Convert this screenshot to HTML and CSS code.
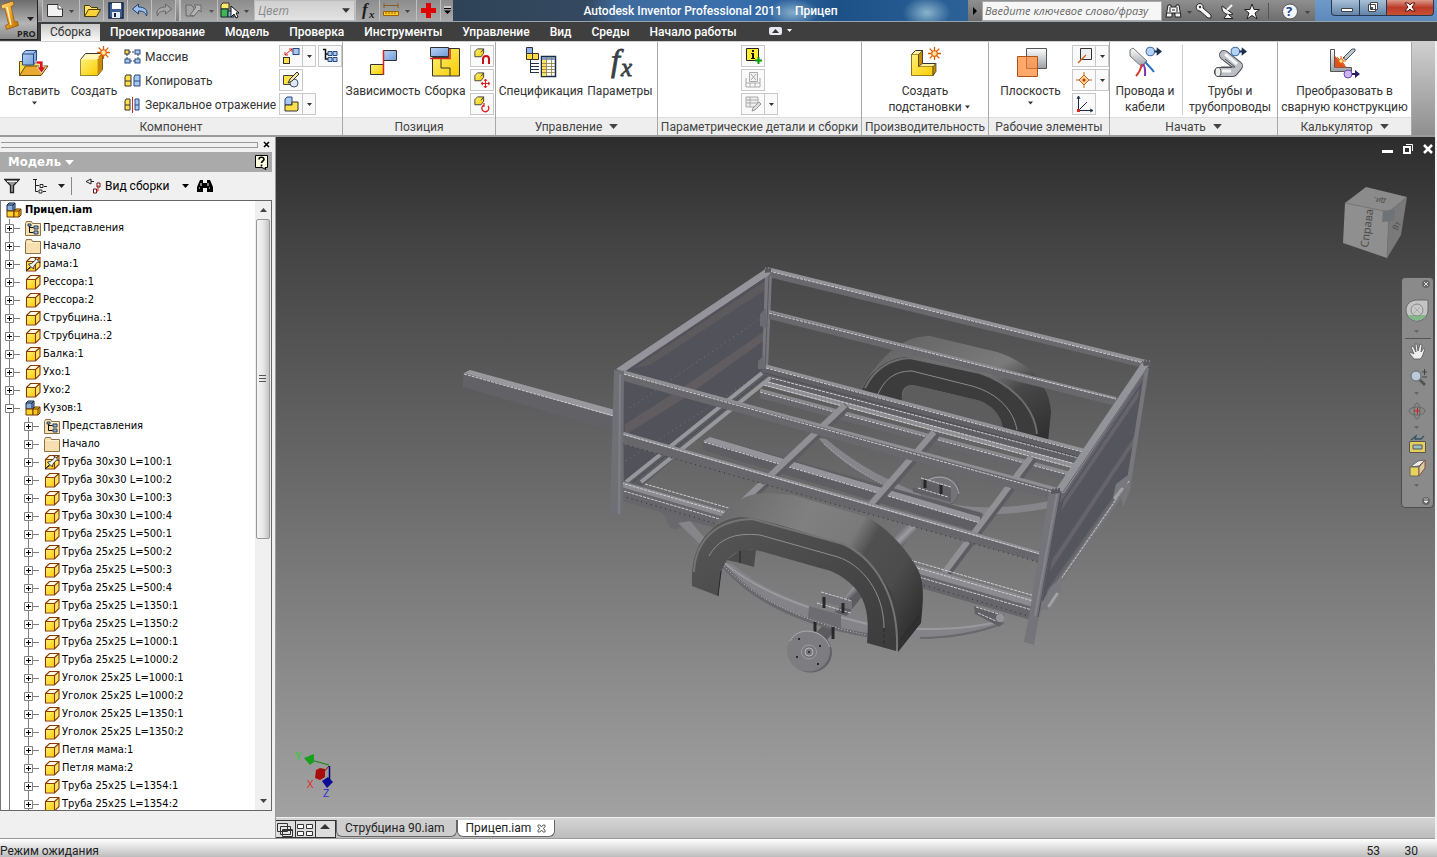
FILE: index.html
```html
<!DOCTYPE html>
<html lang="ru">
<head>
<meta charset="utf-8">
<title>Autodesk Inventor Professional 2011 - Прицеп</title>
<link rel="stylesheet" href="styles.css">
</head>
<body>
<svg class="sprite" aria-hidden="true">
  <defs>
    <linearGradient id="gYellow" x1="0" y1="0" x2="1" y2="1"><stop offset="0" stop-color="#fff27a"/><stop offset="1" stop-color="#f9cc00"/></linearGradient>
    <linearGradient id="gBlue" x1="0" y1="0" x2="1" y2="1"><stop offset="0" stop-color="#b9d4f5"/><stop offset="1" stop-color="#6f9bd8"/></linearGradient>
    <linearGradient id="gSteel" x1="0" y1="0" x2="0" y2="1"><stop offset="0" stop-color="#fdfdfd"/><stop offset="1" stop-color="#9aa0a6"/></linearGradient>
    <linearGradient id="gGold" x1="0" y1="0" x2="1" y2="1"><stop offset="0" stop-color="#ffe28a"/><stop offset="0.5" stop-color="#f0a020"/><stop offset="1" stop-color="#b86c00"/></linearGradient>
  </defs>
  <symbol id="cube" viewBox="0 0 16 16"><path d="M1 5l4-4h10v9l-4 5H1z" fill="#fffbe6"/><path d="M1.500 5.500h9v9h-9z" fill="url(#gYellow)"/><path d="M11 5l4-4v9l-4 4z" fill="#ffe566"/><path d="M1.500 5.500l4-4h9.500v9l-4.500 4.500h-9zM1.500 5.500h9v9M10.500 5.500l4.500-4" fill="none" stroke="#8a3a00" stroke-width="1.100"/></symbol>
  <symbol id="pinned" viewBox="0 0 16 16"><use href="#cube"/><path d="M1 15l4.500-4.500-2-2.500 3-.5 4-3.500-.5-2.500 5 5-2.500-.5-3.500 4-.5 3-2-2z" fill="#f4f4f4" stroke="#222" stroke-width=".9"/></symbol>
  <symbol id="folder" viewBox="0 0 16 16"><path d="M.5 3.500l1-2h5l1 2h8v12H.5z" fill="#f8dfb0" stroke="#8c7347"/><path d="M2 4.500h13" stroke="#fff3d6"/></symbol>
  <symbol id="views" viewBox="0 0 16 16"><use href="#folder"/><path d="M4.500 6v6.500h4M4.500 7.500h4" stroke="#111" fill="none"/><path d="M9 6h4v3H9zM9 11h4v3H9zM3 4h3v2H3z" fill="#9fb4cc" stroke="#23405f"/></symbol>
  <symbol id="asm" viewBox="0 0 16 16"><path d="M1 3l2-2h6v6l-1 2H1z" fill="#8fb0dd" stroke="#10233f"/><path d="M1 3h6v5M7 3l2-2" stroke="#10233f" fill="none"/><path d="M1 9h7v6H1z" fill="#ffd22e" stroke="#6b3500"/><path d="M8 9l2-2h5v6l-2 2H8zM8 9h5v6M13 9l2-2" fill="#ffc61a" stroke="#6b3500"/></symbol>
  <symbol id="plus" viewBox="0 0 24 18"><path d="M8.500 0v18M12 9.500h7" stroke="#808080"/><path d="M4.500 5.500h8v8h-8z" fill="#fff" stroke="#808080"/><path d="M6 9.500h5M8.500 7v5" stroke="#000"/></symbol>
  <symbol id="minus" viewBox="0 0 24 18"><path d="M8.500 0v18M12 9.500h7" stroke="#808080"/><path d="M4.500 5.500h8v8h-8z" fill="#fff" stroke="#808080"/><path d="M6 9.500h5" stroke="#000"/></symbol>
  <symbol id="line" viewBox="0 0 19 18"><path d="M8.500 0v18" stroke="#808080"/></symbol>
  <symbol id="down" viewBox="0 0 7 4"><path d="M0 0h7L3.500 4z" fill="currentColor"/></symbol>
  <symbol id="spark" viewBox="0 0 12 12"><path d="M6 0v12M0 6h12M1.500 1.500l9 9M10.500 1.500l-9 9" stroke="#e05a00" stroke-width="1.200"/><circle cx="6" cy="6" r="2.600" fill="#ffe9a0" stroke="#e05a00"/></symbol>
  <symbol id="smallcube" viewBox="0 0 16 16"><path d="M1 4l3-3h7v5l-3 4H1z" fill="url(#gYellow)" stroke="#333"/><path d="M8 5l3-4" stroke="#333"/></symbol>
  <symbol id="linkout" viewBox="0 0 16 10"><circle cx="5" cy="5" r="4" fill="#b5d3f5" stroke="#3d6ea8"/><path d="M9 5h4" stroke="#1c2f4f" stroke-width="2"/><path d="M11 1l5 4-5 4z" fill="#1c2f4f"/></symbol>
</svg>

<div class="app">
  <header class="top">
    <button class="appbtn" aria-label="Меню приложения">
      <svg width="37" height="39" viewBox="0 0 37 39"><path d="M1 5l12-4 1 4-3 1.500 3.500 15.500 3-.5 1 4-12 4-1-4 3-1.500L5 8.500 2 9z" fill="url(#gGold)" stroke="#7d4a00" stroke-width=".6"/><path d="M7 7l4 18" stroke="#fff0b8" stroke-width="1.500"/><path d="M27 17h7l-3.500 4z" fill="#222"/><text x="17" y="37" class="pro">PRO</text></svg>
    </button>
    <div class="titlebar">
      <div class="qat">
        <button class="q wide" aria-label="Новый"><svg width="32" height="20" viewBox="0 0 32 20"><path d="M4.500 4.500h11l4 4v8h-15z" fill="#f2f2f2" stroke="#333"/><path d="M15 4v5h5" fill="#fff" stroke="#333"/><path d="M26 10h5l-2.500 3z" fill="#444"/></svg></button>
        <button class="q" aria-label="Открыть"><svg width="24" height="20" viewBox="0 0 24 20"><path d="M4.500 16V5.500h5l2 2h6V10" fill="#ffe169" stroke="#4a3b00"/><path d="M4.500 16.500l4-7h12l-4 7z" fill="#f9d335" stroke="#4a3b00"/></svg></button>
        <button class="q" aria-label="Сохранить"><svg width="24" height="20" viewBox="0 0 24 20"><path d="M5 3h14v15H5z" fill="#3e5d91" stroke="#142544" stroke-width="1.500"/><path d="M8 3h9v6H8z" fill="#fff"/><path d="M8 12h8v6H8z" fill="#e4e9f2"/><path d="M10 13h2v4h-2z" fill="#142544"/></svg></button>
        <button class="q" aria-label="Отменить"><svg width="24" height="20" viewBox="0 0 24 20"><path d="M4.500 9l6-5v3c6 0 10 3 8 9-1-4-4-5-8-5v3z" fill="#9cc0ee" stroke="#1d3e6e"/></svg></button>
        <button class="q" aria-label="Повторить"><svg width="24" height="20" viewBox="0 0 24 20"><path d="M19.500 9l-6-5v3c-6 0-10 3-8 9 1-4 4-5 8-5v3z" fill="#a5a5a5" stroke="#666"/></svg></button>
        <i class="sep"></i>
        <button class="q wide" aria-label="Обновить"><svg width="34" height="20" viewBox="0 0 34 20"><path d="M5 5h5l3 3v8H5z" fill="#a4a4a4" stroke="#666"/><path d="M9 15l6-8-2-2h7v7l-2-2-5 6z" fill="#b4b4b4" stroke="#686868"/><path d="M28 10h5l-2.500 3z" fill="#555"/></svg></button>
        <button class="q wide" aria-label="Выбор"><svg width="32" height="20" viewBox="0 0 32 20"><path d="M3 5l2-2h6v6H3z" fill="#ffe969" stroke="#333"/><path d="M3 9h7v8H3z" fill="#42b551" stroke="#123"/><path d="M10 11h6v6h-6z" fill="#8eaedb" stroke="#123"/><path d="M13 6v11l3-3 2 4 2-1-2-4h3z" fill="#fff" stroke="#111"/><path d="M26 10h5l-2.500 3z" fill="#444"/></svg></button>
        <label class="colorbox"><select aria-label="Цвет"><option>Цвет</option></select><svg width="8" height="5"><use href="#down"/></svg></label>
        <button class="q" aria-label="Параметры"><svg width="24" height="20" viewBox="0 0 24 20"><text x="6" y="15" class="fx" font-size="17">f</text><text x="13" y="18" class="fx" font-size="11">x</text></svg></button>
        <button class="q wide" aria-label="Измерить"><svg width="32" height="20" viewBox="0 0 32 20"><path d="M4 5.500h14M4 3v5M18 3v5" stroke="#8a5a20"/><path d="M3.500 11.500h15v4h-15z" fill="#ffc926" stroke="#9a6200"/><path d="M6 12v2M9 12v2M12 12v2M15 12v2" stroke="#9a6200"/><path d="M25 10h5l-2.500 3z" fill="#444"/></svg></button>
        <button class="q" aria-label="Добавить"><svg width="22" height="20" viewBox="0 0 22 20"><path d="M9 3h5v5h5v5h-5v5H9v-5H4V8h5z" fill="#e00000"/></svg></button>
        <button class="q more" aria-label="Настройка панели"><svg width="9" height="9" viewBox="0 0 9 9"><path d="M1 1h7" stroke="#fff" stroke-width="1"/><path d="M1 2.500h7" stroke="#000"/><path d="M1 4.500h7L4.500 8z" fill="#000"/></svg></button>
      </div>
      <div class="aero"><span>Autodesk Inventor Professional 2011</span><span>Прицеп</span></div>
      <div class="info">
        <svg width="14" height="12" viewBox="0 0 14 12"><path d="M5 2l4 4-4 4z" fill="#000"/></svg>
        <input type="text" aria-label="Поиск" placeholder="Введите ключевое слово/фразу">
        <button aria-label="Поиск"><svg width="30" height="20" viewBox="0 0 30 20"><path d="M6 4h3v2h5V4h3l2 12h-6v-4h-3v4H4z" fill="#f4f4f4" stroke="#222"/><path d="M5 12h5M13 12h5M8 6v5M15 6v5M10 9h3" stroke="#222"/><path d="M25 10h5l-2.500 3z" fill="#444"/></svg></button>
        <button aria-label="Центр подписки"><svg width="24" height="20" viewBox="0 0 24 20"><path d="M5 4c2-3 7-1 6 3l8 7v3h-3l-8-7c-3 0-5-3-3-6z" fill="#f4f4f4" stroke="#222"/><circle cx="8" cy="6" r="1.200" fill="#333"/></svg></button>
        <button aria-label="Связь"><svg width="24" height="20" viewBox="0 0 24 20"><path d="M6 5c-1 6 4 10 11 8z" fill="#f4f4f4" stroke="#222"/><path d="M11 9l5-5" stroke="#f4f4f4" stroke-width="2"/><path d="M11 13l-3 4.500h9L13 14" stroke="#222" fill="#f4f4f4"/></svg></button>
        <button aria-label="Избранное"><svg width="24" height="20" viewBox="0 0 24 20"><path d="M12 3l2 5.500h5.500L15 12l2 6-5-3.500L7 18l2-6-4.500-3.500H10z" fill="#f8f8f8" stroke="#222"/></svg></button>
        <i class="isep"></i>
        <button aria-label="Справка"><svg width="38" height="20" viewBox="0 0 38 20"><circle cx="13" cy="10.500" r="7.500" fill="#f3f6fb" stroke="#555"/><text x="9" y="15" class="qm">?</text><path d="M28 10h5l-2.500 3z" fill="#444"/></svg></button>
      </div>
      <div class="win">
        <button aria-label="Свернуть"><svg width="28" height="16" viewBox="0 0 28 16"><path d="M9.500 8.500h11v3h-11z" fill="#fff" stroke="#444"/></svg></button>
        <button aria-label="Восстановить"><svg width="26" height="16" viewBox="0 0 26 16"><path d="M10.500 2.500h7v7h-7zM8.500 4.500h7v7h-7z" fill="#fff" stroke="#444"/><path d="M11 7h2v2h-2z" fill="#456"/></svg></button>
        <button class="close" aria-label="Закрыть"><svg width="46" height="16" viewBox="0 0 46 16"><path d="M18 3h3l2 2 2-2h3l-3 4 3 4h-3l-2-2-2 2h-3l3-4z" fill="#fff" stroke="#511"/></svg></button>
      </div>
    </div>
    <nav class="tabs">
      <button class="on">Сборка</button><button>Проектирование</button><button>Модель</button><button>Проверка</button><button>Инструменты</button><button>Управление</button><button>Вид</button><button>Среды</button><button>Начало работы</button>
      <button class="mini" aria-label="Свернуть ленту"><svg width="24" height="9" viewBox="0 0 24 9"><rect x="0" y="0" width="13" height="8" rx="2" fill="#e8e8f0"/><path d="M3 6h7L6.500 2z" fill="#333"/><path d="M18 2h5l-2.500 3z" fill="#fff"/></svg></button>
    </nav>
  </header>

  <section class="ribbon">
    <div class="panel p1"><div class="body">
      <button class="big w60"><svg width="34" height="34" viewBox="0 0 34 34"><path d="M2.500 15.500h22l-.5 12-21.500 2z" fill="#ffe04a" stroke="#6a4b00"/><path d="M2.500 29.500l6-9.500h22.500l-7 9.500z" fill="#e8aa30" stroke="#6a4b00"/><path d="M5.500 8l3-3.500h11v11l-3 3.500h-11z" fill="url(#gBlue)" stroke="#26497f"/><path d="M5.500 8h11v10.500M16.500 8l3-3.500" fill="none" stroke="#26497f"/><path d="M19 15h7v6h3l-4.500 6-4.500-6h2.500v-3H19z" fill="#d8141c" stroke="#fff" stroke-width=".7"/></svg><span>Вставить</span><svg class="dd" width="5" height="4"><use href="#down"/></svg></button>
      <button class="big w60"><svg width="34" height="34" viewBox="0 0 34 34"><path d="M3.500 13.500l5-6h17v16l-5 6h-17z" fill="#fff6b8" stroke="#333"/><path d="M3.500 13.500h17v16h-17z" fill="url(#gYellow)"/><path d="M20.500 13.500l5-6v16l-5 6z" fill="#c98a00"/><use href="#spark" x="20" y="0" width="13" height="13"/></svg><span>Создать</span></button>
      <div class="rows">
        <button><svg width="17" height="16" viewBox="0 0 17 16"><path d="M5 3h7M3 5v6M14 5v6M6 12h5" stroke="#335" stroke-dasharray="2 1"/><rect x="1" y="1" width="4" height="4" fill="#ffe04a" stroke="#333"/><rect x="11" y="1" width="5" height="4" fill="#a9c8f2" stroke="#26497f"/><rect x="1" y="10" width="5" height="4" fill="#a9c8f2" stroke="#26497f"/><rect x="11" y="10" width="5" height="4" fill="#a9c8f2" stroke="#26497f"/></svg>Массив</button>
        <button><svg width="17" height="16" viewBox="0 0 17 16"><path d="M1 4l1-2h5v11H1zM1 8h6" fill="#ffe04a" stroke="#333"/><path d="M10 4l1-2h5v11h-6zM10 8h6" fill="#a9c8f2" stroke="#26497f"/></svg>Копировать</button>
        <button><svg width="17" height="16" viewBox="0 0 17 16"><path d="M1 4l1-2h4v11H1zM1 8h5" fill="#ffe04a" stroke="#333"/><path d="M11 2h4v11h-4zM11 8h4" fill="#a9c8f2" stroke="#26497f"/><path d="M8.500 0v16" stroke="#d22"/></svg>Зеркальное отражение</button>
      </div>
      <div class="minis">
        <div><span class="split"><button aria-label="Разместить"><svg width="20" height="20" viewBox="0 0 20 20"><rect x="2.500" y="11.500" width="6" height="6" fill="#ffe04a" stroke="#333"/><rect x="12" y="2.500" width="6" height="6" fill="#a9c8f2" stroke="#26497f"/><path d="M4 9l7-6M4 6v3h3M8 3h3v3" stroke="#d22" fill="none"/></svg></button><button class="arr" aria-label="Ещё"><svg width="5" height="3"><use href="#down"/></svg></button></span><button class="sq" aria-label="Дерево"><svg width="20" height="20" viewBox="0 0 20 20"><path d="M3 3.500h2.500V13H8M5.500 8H8" stroke="#111" fill="none" stroke-width="1.500"/><path d="M8 5.500h4v4H8zM13 5.500h4v4h-4zM8 11.500h4v4H8zM13 11.500h4v4h-4z" fill="#a9c8f2" stroke="#26497f"/></svg></button></div>
        <div><button class="sq" aria-label="Правка"><svg width="20" height="20" viewBox="0 0 20 20"><path d="M2.500 5.500h11v9h-11z" fill="#ffe04a" stroke="#444"/><circle cx="13" cy="13" r="4" fill="#dfe8f4" stroke="#456"/><path d="M7 13l2-4 7-7 2 2-7 7z" fill="#fbe3a0" stroke="#333"/></svg></button></div>
        <div><span class="split"><button aria-label="Деталь"><svg width="20" height="20" viewBox="0 0 20 20"><path d="M4 5l2-2h5v8H4z" fill="#a9c8f2" stroke="#26497f"/><path d="M4 11h7V8h6v8l-1 1H4z" fill="#ffe04a" stroke="#333"/></svg></button><button class="arr" aria-label="Ещё"><svg width="5" height="3"><use href="#down"/></svg></button></span></div>
      </div>
    </div><h2>Компонент</h2></div>

    <div class="panel p2"><div class="body">
      <button class="big w80"><svg width="34" height="34" viewBox="0 0 34 34"><path d="M17.500 4.500h13v10h-13z" fill="url(#gBlue)" stroke="#333"/><path d="M4.500 18.500h13v10h-13z" fill="url(#gYellow)" stroke="#333"/><path d="M17.500 4v25" stroke="#d22" stroke-width="1.500"/></svg><span>Зависимость</span></button>
      <button class="big w44"><svg width="34" height="34" viewBox="0 0 34 34"><path d="M4.500 11.500h16v-9h11v27.500h-27z" fill="url(#gYellow)" stroke="#333"/><path d="M13 13v9h9v8" fill="none" stroke="#333"/><path d="M2.500 1.500h18v9h-18z" fill="url(#gBlue)" stroke="#333"/><path d="M2 12.500h20V3" fill="none" stroke="#d22" stroke-width="1.500"/></svg><span>Сборка</span></button>
      <div class="minis">
        <div><button class="sq" aria-label="Магнит"><svg width="20" height="20" viewBox="0 0 20 20"><use href="#smallcube" x="2" y="2" width="14" height="14"/><path d="M11 18v-5c0-4 6-4 6 0v5" fill="none" stroke="#c11" stroke-width="2"/></svg></button></div>
        <div><button class="sq" aria-label="Переместить"><svg width="20" height="20" viewBox="0 0 20 20"><use href="#smallcube" x="2" y="2" width="14" height="14"/><path d="M13.500 9v9M9 13.500h9M12 11l1.500-2 1.500 2M12 16l1.500 2 1.500-2M11 12l-2 1.500 2 1.500M16 12l2 1.500-2 1.500" stroke="#d22" fill="none"/></svg></button></div>
        <div><button class="sq" aria-label="Повернуть"><svg width="20" height="20" viewBox="0 0 20 20"><use href="#smallcube" x="2" y="2" width="14" height="14"/><path d="M12 11a3.500 3.500 0 1 0 4 1M12 9v3h-2" stroke="#d22" stroke-width="1.300" fill="none"/></svg></button></div>
      </div>
    </div><h2>Позиция</h2></div>

    <div class="panel p3"><div class="body">
      <button class="big w90"><svg width="34" height="34" viewBox="0 0 34 34"><path d="M2.500 1.500h6v6h-6z" fill="#8fb4ec" stroke="#333"/><path d="M2.500 7.500h6v6h-6zM8.500 7.500h6v6h-6z" fill="#ffdc3c" stroke="#333"/><path d="M6.500 13v14M6 17.500h9M6 20.500h9M6 23.500h9M6 26.500h9" stroke="#234"/><path d="M17.500 10.500h14v20h-14z" fill="#fff" stroke="#1b2c48" stroke-width="1.500"/><path d="M18 11h13v3H18z" fill="#7f9cc4"/><path d="M18 14h4v16h-4z" fill="#ffe169"/><path d="M18 17.500h13M18 20.500h13M18 23.500h13M18 26.500h13M22.500 11v19M27.500 11v19" stroke="#8a7a40" stroke-width=".8"/></svg><span>Спецификация</span></button>
      <button class="big w68"><svg width="34" height="34" viewBox="0 0 34 34"><text x="8" y="25" class="fxb" font-size="32">f</text><text x="18" y="30" class="fxb" font-size="25">x</text></svg><span>Параметры</span></button>
    </div><h2>Управление <svg width="9" height="5" viewBox="0 0 7 4"><use href="#down"/></svg></h2></div>

    <div class="panel p4"><div class="body mid">
      <div class="minis">
        <div><button class="sq" aria-label="Свойства"><svg width="20" height="20" viewBox="0 0 20 20"><path d="M3.500 2.500h12v12h-12z" fill="#ffee32" stroke="#222"/><path d="M9 4h2v2H9zM8 7h3v5h1v1H8v-1h1V8H8z" fill="#111"/><path d="M15.500 11v7M12 14.500h7" stroke="#0a9a10" stroke-width="2"/></svg></button></div>
        <div><button class="sq" disabled aria-label="Таблица"><svg width="20" height="20" viewBox="0 0 20 20"><path d="M3 8v9h14V8M3 13h14M7 13v4M12 13v4" fill="none" stroke="#aaa"/><path d="M6.500 2.500h8v9h-8zM8 4l5 6M13 4l-5 6" fill="#f2f2f2" stroke="#aaa"/></svg></button></div>
        <div><span class="split"><button disabled aria-label="Править таблицу"><svg width="20" height="20" viewBox="0 0 20 20"><path d="M3 3h12v10H3zM3 6h12M3 9h12M7 3v10" fill="#eee" stroke="#aaa"/><path d="M9 17l1-3 6-6 2 2-6 6z" fill="#ddd" stroke="#999"/></svg></button><button class="arr" aria-label="Ещё"><svg width="5" height="3"><use href="#down"/></svg></button></span></div>
      </div>
    </div><h2>Параметрические детали и сборки</h2></div>

    <div class="panel p5"><div class="body mid">
      <button class="big"><svg width="34" height="34" viewBox="0 0 34 34"><path d="M3.500 8.500l4-4h7v13h13l-2 11.500h-22z" fill="#fff2a0" stroke="#333"/><path d="M3.500 8.500h7v12h14.500v9H3.500z" fill="url(#gYellow)" stroke="#8a6500" stroke-width=".7"/><path d="M10.500 8.500l4-4v13l-4 3zM25 20.500l3-3v8l-3 4z" fill="#c98a00" stroke="#333" stroke-width=".7"/><use href="#spark" x="20" y="1" width="13" height="13"/></svg><span>Создать</span><span class="last">подстановки <svg width="5" height="4"><use href="#down"/></svg></span></button>
    </div><h2>Производительность</h2></div>

    <div class="panel p6"><div class="body">
      <button class="big w82"><svg width="34" height="34" viewBox="0 0 34 34"><path d="M12.500 2.500h20v20h-20z" fill="url(#gSteel)" stroke="#555"/><path d="M3.500 10.500h20v20h-20z" fill="#ff9a50" fill-opacity=".85" stroke="#b0521a"/><path d="M12.500 10v12.500h11" fill="none" stroke="#b0521a" stroke-opacity=".5"/></svg><span>Плоскость</span><svg class="dd" width="5" height="4"><use href="#down"/></svg></button>
      <div class="minis">
        <div><span class="split"><button aria-label="Ось"><svg width="20" height="20" viewBox="0 0 20 20"><path d="M6.500 2.500h11v11h-11z" fill="#eceef0" stroke="#333"/><path d="M4 17l8-8" stroke="#d2601a" stroke-width="1.500"/></svg></button><button class="arr" aria-label="Ещё"><svg width="5" height="3"><use href="#down"/></svg></button></span></div>
        <div><span class="split"><button aria-label="Точка"><svg width="20" height="20" viewBox="0 0 20 20"><path d="M10 5l5 5-5 5-5-5z" fill="#ffd08a" stroke="#c8641a"/><path d="M10 2v3M10 15v3M2 10h3M15 10h3" stroke="#c8641a"/><circle cx="10" cy="10" r="1.500" fill="#a33"/></svg></button><button class="arr" aria-label="Ещё"><svg width="5" height="3"><use href="#down"/></svg></button></span></div>
        <div><button class="sq" aria-label="ПСК"><svg width="20" height="20" viewBox="0 0 20 20"><path d="M4.500 3v13.500h14M5 16l8-8" fill="none" stroke="#1b2c48"/><path d="M3 5l1.500-3L6 5M16 15l3 1.500-3 1.500" fill="none" stroke="#1b2c48"/><path d="M3 15h3v3H3z" fill="#d22"/></svg></button></div>
      </div>
    </div><h2>Рабочие элементы</h2></div>

    <div class="panel p7"><div class="body">
      <button class="big w70"><svg width="34" height="34" viewBox="0 0 34 34"><path d="M2 4l3-2 14 13-5 6L2 10z" fill="url(#gSteel)" stroke="#777"/><path d="M14 18c-1 4-2 8-6 12" stroke="#d8382c" stroke-width="2" fill="none"/><path d="M15 18c3 4 2 7 2 12" stroke="#7a3ab0" stroke-width="2" fill="none"/><path d="M17 16c3 3 6 6 9 10" stroke="#2a72c4" stroke-width="2" fill="none"/><use href="#linkout" x="17" y="0" width="17" height="11"/></svg><span>Провода и</span><span>кабели</span></button>
      <i class="vsep"></i>
      <button class="big grow"><svg width="34" height="34" viewBox="0 0 34 34"><path d="M11 9l14 11-5 6H6" fill="none" stroke="#4a4f55" stroke-width="10" stroke-linejoin="round" stroke-linecap="round"/><path d="M11 9l14 11-5 6H6" fill="none" stroke="#bcc0c5" stroke-width="8" stroke-linejoin="round" stroke-linecap="round"/><path d="M12 8l12 10M18 25H7" fill="none" stroke="#f4f5f6" stroke-width="3" stroke-linejoin="round"/><path d="M12 13l10 8H8" fill="none" stroke="#4a4f55"/><ellipse cx="5" cy="26" rx="3" ry="4.500" fill="#eee" stroke="#4a4f55"/><use href="#linkout" x="17" y="0" width="17" height="11"/></svg><span>Трубы и</span><span>трубопроводы</span></button>
    </div><h2>Начать <svg width="9" height="5" viewBox="0 0 7 4"><use href="#down"/></svg></h2></div>

    <div class="panel p8"><div class="body mid">
      <button class="big"><svg width="34" height="34" viewBox="0 0 34 34"><path d="M3.500 3.500h4v18h17v4h-21z" fill="url(#gSteel)" stroke="#555"/><path d="M8 10l12 11.500H8z" fill="#e2501c"/><path d="M16 12l9-9h3v2l-9 9z" fill="#bcc4cc" stroke="#456"/><use href="#spark" x="9" y="10" width="10" height="10"/><circle cx="21" cy="28" r="4" fill="#cdb6f0" stroke="#6a4ab0"/><path d="M25 28h4" stroke="#2b1c5f" stroke-width="2"/><path d="M28 24l5 4-5 4z" fill="#2b1c5f"/></svg><span>Преобразовать в</span><span>сварную конструкцию</span></button>
    </div><h2>Калькулятор <svg width="9" height="5" viewBox="0 0 7 4"><use href="#down"/></svg></h2></div>
  </section>

  <main class="work">
    <aside class="side">
      <div class="grip"><i></i><button aria-label="Закрыть панель"><svg width="7" height="7" viewBox="0 0 7 7"><path d="M1 1l5 5M6 1L1 6" stroke="#000" stroke-width="1.600"/></svg></button></div>
      <div class="shead"><b>Модель</b><svg width="9" height="5" viewBox="0 0 7 4"><use href="#down"/></svg><button aria-label="Справка"><svg width="14" height="15" viewBox="0 0 14 15"><path d="M.5.500h12v12H10l1 2-4-2H.5z" fill="#ffffe1" stroke="#000"/><path d="M4 4.500c0-3 5-3 5 0 0 1.500-2.500 1.500-2.500 3.500M6.500 9.500v2" fill="none" stroke="#000" stroke-width="1.600"/></svg></button></div>
      <div class="stools">
        <button aria-label="Фильтр"><svg width="16" height="16" viewBox="0 0 16 16"><path d="M.8 1.500h14.400l-5.700 6v7h-3v-7z" fill="#999" stroke="#222" stroke-width="1.300"/><path d="M3 3.500h10" stroke="#eee"/></svg></button>
        <button class="t2" aria-label="Структура"><svg width="32" height="16" viewBox="0 0 32 16"><path d="M0 1.500h4M2.500 2v11.500H5M2.500 7.500H6M11 8.500h3M10 13.500h3" stroke="#222" fill="none"/><path d="M7 6.500h3v3H7zM6 12h3v3H6z" stroke="#222" fill="#fff"/><path d="M25 6h7l-3.500 4z" fill="#222"/></svg></button>
        <i></i>
        <button class="t3"><svg width="16" height="16" viewBox="0 0 16 16"><path d="M6 1L1 3.500 6 6zM6 3.500h3" fill="none" stroke="#222"/><path d="M8.500 11h3v4h-3zM12 5h3v4h-3z" fill="#fff" stroke="#611"/><path d="M11 13h2V7" stroke="#c22" fill="none"/></svg><span>Вид сборки</span><svg width="7" height="4"><use href="#down"/></svg></button>
        <button class="t4" aria-label="Найти"><svg width="16" height="14" viewBox="0 0 16 14"><path d="M3 1h3v3h4V1h3l3 7v5h-6V9H6v4H0V8z" fill="#000"/><path d="M2 9h1M12 9h1M4 4v3M11 4v3" stroke="#fff"/></svg></button>
      </div>
      <div class="treebox">
        <ul class="tree">
          <li class="root"><svg class="ic"><use href="#asm"/></svg><b>Прицеп.iam</b></li>
          <li><button aria-label="Развернуть"><svg><use href="#plus"/></svg></button><svg class="ic"><use href="#views"/></svg>Представления</li>
          <li><button aria-label="Развернуть"><svg><use href="#plus"/></svg></button><svg class="ic"><use href="#folder"/></svg>Начало</li>
          <li><button aria-label="Развернуть"><svg><use href="#plus"/></svg></button><svg class="ic"><use href="#pinned"/></svg>рама:1</li>
          <li><button aria-label="Развернуть"><svg><use href="#plus"/></svg></button><svg class="ic"><use href="#cube"/></svg>Рессора:1</li>
          <li><button aria-label="Развернуть"><svg><use href="#plus"/></svg></button><svg class="ic"><use href="#cube"/></svg>Рессора:2</li>
          <li><button aria-label="Развернуть"><svg><use href="#plus"/></svg></button><svg class="ic"><use href="#cube"/></svg>Струбцина.:1</li>
          <li><button aria-label="Развернуть"><svg><use href="#plus"/></svg></button><svg class="ic"><use href="#cube"/></svg>Струбцина.:2</li>
          <li><button aria-label="Развернуть"><svg><use href="#plus"/></svg></button><svg class="ic"><use href="#cube"/></svg>Балка:1</li>
          <li><button aria-label="Развернуть"><svg><use href="#plus"/></svg></button><svg class="ic"><use href="#cube"/></svg>Ухо:1</li>
          <li><button aria-label="Развернуть"><svg><use href="#plus"/></svg></button><svg class="ic"><use href="#cube"/></svg>Ухо:2</li>
          <li><button aria-label="Свернуть"><svg><use href="#minus"/></svg></button><svg class="ic"><use href="#asm"/></svg>Кузов:1</li>
          <li><svg class="ln"><use href="#line"/></svg><button aria-label="Развернуть"><svg><use href="#plus"/></svg></button><svg class="ic"><use href="#views"/></svg>Представления</li>
          <li><svg class="ln"><use href="#line"/></svg><button aria-label="Развернуть"><svg><use href="#plus"/></svg></button><svg class="ic"><use href="#folder"/></svg>Начало</li>
          <li><svg class="ln"><use href="#line"/></svg><button aria-label="Развернуть"><svg><use href="#plus"/></svg></button><svg class="ic"><use href="#pinned"/></svg>Труба 30x30 L=100:1</li>
          <li><svg class="ln"><use href="#line"/></svg><button aria-label="Развернуть"><svg><use href="#plus"/></svg></button><svg class="ic"><use href="#cube"/></svg>Труба 30x30 L=100:2</li>
          <li><svg class="ln"><use href="#line"/></svg><button aria-label="Развернуть"><svg><use href="#plus"/></svg></button><svg class="ic"><use href="#cube"/></svg>Труба 30x30 L=100:3</li>
          <li><svg class="ln"><use href="#line"/></svg><button aria-label="Развернуть"><svg><use href="#plus"/></svg></button><svg class="ic"><use href="#cube"/></svg>Труба 30x30 L=100:4</li>
          <li><svg class="ln"><use href="#line"/></svg><button aria-label="Развернуть"><svg><use href="#plus"/></svg></button><svg class="ic"><use href="#cube"/></svg>Труба 25x25 L=500:1</li>
          <li><svg class="ln"><use href="#line"/></svg><button aria-label="Развернуть"><svg><use href="#plus"/></svg></button><svg class="ic"><use href="#cube"/></svg>Труба 25x25 L=500:2</li>
          <li><svg class="ln"><use href="#line"/></svg><button aria-label="Развернуть"><svg><use href="#plus"/></svg></button><svg class="ic"><use href="#cube"/></svg>Труба 25x25 L=500:3</li>
          <li><svg class="ln"><use href="#line"/></svg><button aria-label="Развернуть"><svg><use href="#plus"/></svg></button><svg class="ic"><use href="#cube"/></svg>Труба 25x25 L=500:4</li>
          <li><svg class="ln"><use href="#line"/></svg><button aria-label="Развернуть"><svg><use href="#plus"/></svg></button><svg class="ic"><use href="#cube"/></svg>Труба 25x25 L=1350:1</li>
          <li><svg class="ln"><use href="#line"/></svg><button aria-label="Развернуть"><svg><use href="#plus"/></svg></button><svg class="ic"><use href="#cube"/></svg>Труба 25x25 L=1350:2</li>
          <li><svg class="ln"><use href="#line"/></svg><button aria-label="Развернуть"><svg><use href="#plus"/></svg></button><svg class="ic"><use href="#cube"/></svg>Труба 25x25 L=1000:1</li>
          <li><svg class="ln"><use href="#line"/></svg><button aria-label="Развернуть"><svg><use href="#plus"/></svg></button><svg class="ic"><use href="#cube"/></svg>Труба 25x25 L=1000:2</li>
          <li><svg class="ln"><use href="#line"/></svg><button aria-label="Развернуть"><svg><use href="#plus"/></svg></button><svg class="ic"><use href="#cube"/></svg>Уголок 25x25 L=1000:1</li>
          <li><svg class="ln"><use href="#line"/></svg><button aria-label="Развернуть"><svg><use href="#plus"/></svg></button><svg class="ic"><use href="#cube"/></svg>Уголок 25x25 L=1000:2</li>
          <li><svg class="ln"><use href="#line"/></svg><button aria-label="Развернуть"><svg><use href="#plus"/></svg></button><svg class="ic"><use href="#cube"/></svg>Уголок 25x25 L=1350:1</li>
          <li><svg class="ln"><use href="#line"/></svg><button aria-label="Развернуть"><svg><use href="#plus"/></svg></button><svg class="ic"><use href="#cube"/></svg>Уголок 25x25 L=1350:2</li>
          <li><svg class="ln"><use href="#line"/></svg><button aria-label="Развернуть"><svg><use href="#plus"/></svg></button><svg class="ic"><use href="#cube"/></svg>Петля мама:1</li>
          <li><svg class="ln"><use href="#line"/></svg><button aria-label="Развернуть"><svg><use href="#plus"/></svg></button><svg class="ic"><use href="#cube"/></svg>Петля мама:2</li>
          <li><svg class="ln"><use href="#line"/></svg><button aria-label="Развернуть"><svg><use href="#plus"/></svg></button><svg class="ic"><use href="#cube"/></svg>Труба 25x25 L=1354:1</li>
          <li><svg class="ln"><use href="#line"/></svg><button aria-label="Развернуть"><svg><use href="#plus"/></svg></button><svg class="ic"><use href="#cube"/></svg>Труба 25x25 L=1354:2</li>
        </ul>
        <div class="sbar">
          <button aria-label="Вверх"><svg width="7" height="4" viewBox="0 0 7 4"><path d="M0 4h7L3.500 0z" fill="#444"/></svg></button>
          <div class="thumb"><svg width="8" height="8" viewBox="0 0 8 8"><path d="M0 .5h7M0 3.500h7M0 6.500h7" stroke="#555"/></svg></div>
          <div class="rest"></div>
          <button aria-label="Вниз"><svg width="7" height="4"><use href="#down"/></svg></button>
        </div>
      </div>
    </aside>

    <section class="view">
      <div class="canvas">
        <svg class="scene" viewBox="276 137 1159 680" preserveAspectRatio="xMidYMid meet" role="img" aria-label="Модель прицепа">
          <defs>
            <linearGradient id="fTop" gradientUnits="userSpaceOnUse" x1="720" y1="500" x2="925" y2="620"><stop offset="0" stop-color="#6a6a6a"/><stop offset=".35" stop-color="#808080"/><stop offset=".56" stop-color="#7a7a7a"/><stop offset=".64" stop-color="#505050"/><stop offset=".8" stop-color="#4c4c4c"/><stop offset="1" stop-color="#2c2c2c"/></linearGradient>
            <linearGradient id="fFace" x1="0" y1="0" x2="1" y2="1"><stop offset="0" stop-color="#575757"/><stop offset="1" stop-color="#3b3b3b"/></linearGradient>
            <linearGradient id="rTop" x1="0" y1="0" x2="1" y2="1"><stop offset="0" stop-color="#5f5f5f"/><stop offset=".5" stop-color="#7b7b7b"/><stop offset=".66" stop-color="#484848"/><stop offset="1" stop-color="#2d2d2d"/></linearGradient>
            <linearGradient id="pipe" gradientUnits="userSpaceOnUse" x1="860" y1="570" x2="870" y2="580"><stop offset="0" stop-color="#707074"/><stop offset=".5" stop-color="#9c9ca0"/><stop offset="1" stop-color="#5c5c60"/></linearGradient>
          </defs>
          <!-- rear wheel arch -->
          <path d="M862 388C872 370 886 352 903 343 912 338 920 336 930 336L997 352C1010 356 1020 362 1028 368 1042 380 1050 395 1051 412L1048 442 1003 428 902 395z" fill="url(#rTop)"/>
          <path d="M862 390C870 372 886 358 908 357L978 372C1005 380 1036 404 1036 437L1003 429C1002 416 992 404 977 400L913 385C904 385 901 390 902 402z" fill="#3c3c3c"/>
          <path d="M902 402c0-12 3-17 11-17l64 15c15 4 25 16 26 29z" fill="#5d5d5d"/>
          <path d="M865 388C875 368 890 359 910 358L980 373C1007 382 1034 404 1037 434" class="rim"/>
          <path d="M878 394C886 376 898 371 912 371L972 386C1000 394 1014 412 1017 430" fill="none" stroke="#8a8a8a"/>
          <!-- drawbar -->
          <path d="M463 374l6-4 146 40v22L463 387z" fill="#616166"/><path d="M464 373l6-3 145 40v7z" fill="#98989d"/><path d="M464 374l150 42" class="hl"/>
          <!-- left board -->
          <path d="M622 372L768 276v94L624 482z" fill="#52525b"/>
          <path d="M634 368L768 279v9L650 365z" fill="#5d5a5d"/><path d="M625 424l54-34 87-60v9l-86 62-55 34z" fill="#605c5f"/>
          <path d="M630 408l134-92M626 461l138-90" stroke="#77777e" stroke-dasharray="1 4"/>
          <path d="M765 275h7l-4 94h-6z" fill="#77777d"/><path d="M769 275l-4 94" stroke="#5a5a60"/><path d="M760 314l6-6v20l-6-2zM758 361l6-6v14h-6z" fill="#6b6b70"/>
          <path d="M616 369L767 268l5 5L624 372z" fill="#94949a"/>
          <!-- floor rails, far side -->
          <path d="M762 368l322 84-6 12-318-81z" fill="#606065"/>
          <path d="M766 366l317 84" stroke="#929297" stroke-width="3"/><path d="M766 368l317 84M764 376l315 82" class="hl"/><path d="M764 373l315 84" stroke="#4e4e53"/>
          <path d="M764 383l311 83" stroke="#8e8e93" stroke-width="5"/><path d="M764 381l311 83M764 385l310 83" class="hl"/>
          <path d="M760 395l309 83" stroke="#66666b" stroke-width="6"/><path d="M760 390l309 83" stroke="#8a8a8f" stroke-width="3"/><path d="M760 392l309 83" class="hl"/>
          <!-- floor rails, left side -->
          <path d="M624 482L762 372l8 4-130 112z" fill="#5b5b62"/>
          <path d="M626 482L762 373M641 482L770 378" stroke="#97979c" stroke-width="4"/><path d="M633 482L766 376" stroke="#46464d" stroke-dasharray="5 1"/>
          <!-- far leaf spring and hub -->
          <path d="M818 438l8 1c22 18 44 32 62 40 24 12 54 27 90 28 34 1 48-2 72-6v7c-24 4-40 7-72 6-40-2-70-14-96-30-26-12-48-28-64-46z" fill="#85858a"/>
          <path d="M824 444c40 34 86 62 154 69" fill="none" stroke="#b5b5ba" stroke-dasharray="1 2"/>
          <ellipse cx="940" cy="491" rx="19" ry="16" fill="#737378" stroke="#5e5e63"/><path d="M928 480c14-7 29 0 31 14" fill="none" stroke="#a8a8ac"/>
          <path d="M921 479l30 9v14l-38-10v-4l8 1z" fill="#606065"/><path d="M921 478l30 9M918 488l30 9" class="hl"/><path d="M925 480v8M941 485v9" stroke="#262629" stroke-width="3"/>
          <!-- central beam -->
          <path d="M703 440l7-3 272 76-2 20-277-83z" fill="#5e5e63"/><path d="M703 441l7-4 270 80v6z" fill="#94949a"/><path d="M704 442l276 81" class="hl"/>
          <!-- axle -->
          <path d="M914 522L822 636" stroke="url(#pipe)" stroke-width="13"/>
          <!-- cross members -->
          <g stroke="#5c5c61" stroke-width="9"><path d="M739 508L847 406"/><path d="M873 505l63-71"/><path d="M946 574l87-116"/></g>
          <g stroke="#909095" stroke-width="6"><path d="M737 507L845 405"/><path d="M871 504l63-72"/><path d="M944 573l87-116"/></g>
          <!-- near floor beam -->
          <path d="M620 480l414 118-3 22-412-120z" fill="#66666b"/><path d="M621 481l412 117v9L621 487z" fill="#8b8b90"/>
          <path d="M621 483l412 118M645 484l390 112M620 490l412 120" class="hl"/><path d="M622 496l410 121" class="dk"/>
          <path d="M662 512l32 9-18 8-6-1z" fill="#68686d"/>
          <path d="M678 523l12-2 14 16-4 7z" fill="#85858a"/>
          <!-- near leaf spring -->
          <path d="M722 562l10 2c20 16 40 28 80 42l60 17c40 8 80 8 130-3l3 4c-30 12-90 18-134 11-40-7-70-16-94-30-24-14-48-30-57-43z" fill="#838388"/>
          <path d="M722 564c28 34 76 60 150 72" fill="none" stroke="#68686d" stroke-width="4"/><path d="M724 566c28 30 74 56 148 70" fill="none" stroke="#c4c4c8" stroke-dasharray="1 2"/><path d="M920 638c30 0 60-6 84-15" fill="none" stroke="#68686d" stroke-width="2"/><path d="M724 563c30 24 70 44 148 62 40 6 90 6 130-4" fill="none" stroke="#999a9e" stroke-width="2"/>
          <path d="M974 606l30 9-4 12-25-13z" fill="#606065"/><path d="M976 607l26 8M978 613l18 8" class="hl"/><circle cx="1000" cy="618" r="4" fill="#94949a"/>
          <!-- hub -->
          <path d="M821 592l31 9v9l-31-9z" fill="#737378"/><path d="M821 592l31 9M817 603l34 10" class="hl"/>
          <path d="M824 597v11M843 603v10M815 622v10M833 627v12" stroke="#28282b" stroke-width="3"/>
          <path d="M809 606l32 9v13l-33-10z" fill="#6c6c71"/>
          <ellipse cx="810.500" cy="652.500" rx="21.500" ry="20" fill="#626267"/><ellipse cx="808.500" cy="651" rx="21.500" ry="20.500" fill="#7c7c81"/><path d="M790 641c8-15 32-13 40 6" fill="none" stroke="#aaaab0"/>
          <ellipse cx="809" cy="652" rx="7.500" ry="7" fill="#77777c" stroke="#9d9da2"/><circle cx="809" cy="652" r="4" fill="none" stroke="#bbb"/><circle cx="809" cy="652" r="1" fill="#222"/>
          <path d="M798 639h2M819 646h2M796 657h2M817 664h2" stroke="#29292c" stroke-width="2"/>
          <!-- near wheel arch -->
          <path d="M727 560l13-10h16l-2 17-14-4z" fill="#4c4c4c"/>
          <path d="M716 524C728 504 745 493 767 493L793 495 867 517C885 526 906 548 917 568 924 580 924 595 921 623L898 652 890 600 780 530z" fill="url(#fTop)"/>
          <path d="M692 586C691 560 697 540 716 526 728 518 738 516 752 518L780 525 843 544C862 554 897 588 897 610L896 651 867 643C869 620 868 600 852 585 842 575 830 570 820 568L760 551C735 545 722 560 720 580L718 596z" fill="url(#fFace)"/>
          <path d="M694 572C695 545 712 520 752 519L843 544C870 556 899 590 897 650" class="rim2"/>
          <path d="M709 556C718 540 733 532 760 535L838 557C862 565 884 592 884 628" fill="none" stroke="#8e8e8e"/><path d="M884 628v19" stroke="#2c2c2c" stroke-dasharray="4 2"/>
          <path d="M718 596l3-25M901 640l18-24" stroke="#282828"/>
          <path d="M740 551v12" stroke="#222"/>
          <!-- right board -->
          <path d="M1060 492l88-127-22 124-82 113-5-2z" fill="#55555e"/>
          <path d="M1064 500l76-112-2 10-77 113zM1052 560l84-126-2 10-84 127zM1047 590l83-117v6l-84 121zM1061 492l87-124-2 8-86 127z" fill="#66646a"/>
          <path d="M1145 368h4l-19 122-7 18-2-12 5-10z" fill="#77777c"/>
          <path d="M1042 606l86-123M1038 612l85-120" stroke="#75757a" stroke-width="4"/><path d="M1043 605l86-124" class="hl"/>
          <path d="M1050 588l12-12-2 16-12 18-7-1 2-8zM1116 484l12-9-1 10-10 14-4-2z" fill="#78787d"/><path d="M1049 606l8-12M1115 498l7-9" stroke="#a2a2a6" stroke-width="3" stroke-linecap="round"/>
          <!-- near rails and posts -->
          <path d="M769 270l379 91v8L772 278z" fill="#68686d"/><path d="M769 269l379 93" stroke="#929297" stroke-width="3"/><path d="M769 271l379 93" class="hl"/>
          <path d="M769 312l349 86-2 8-347-87z" fill="#68686d"/><path d="M769 311l347 87" stroke="#8b8b90" stroke-width="2"/><path d="M769 313l347 86" class="hl"/>
          <path d="M1143 361l8 2-87 130-10-1z" fill="#93939a"/><path d="M1150 364l-87 128" stroke="#65656b"/>
          <path d="M620 371l433 118-2 10-431-119z" fill="#68686d"/><path d="M620 371l436 118" stroke="#8e8e93" stroke-width="3"/><path d="M620 373l433 119" class="hl"/>
          <path d="M622 433l418 118-1 11-417-118z" fill="#66666b"/><path d="M622 433l418 120" stroke="#8e8e93" stroke-width="3"/><path d="M622 434l418 120" class="hl"/><path d="M623 444l415 118" class="dk"/>
          <path d="M614 370l10 1-1 140-5 5-8-2z" fill="#6f6f76"/><path d="M620 374l-1 140" stroke="#7f7f86" stroke-width="2"/>
          <path d="M1049 492l12-1-22 126-5 28-10-3 7-38z" fill="#74747a"/><path d="M1057 494l-22 122" stroke="#85858c" stroke-width="2"/><path d="M1061 491l-23 126" stroke="#515157"/>
          <path d="M1051 489l9-1v5l-9 1zM1142 361l7-2 2 6-7 1zM765 268l6-1v5l-6 1z" fill="#58585d"/><path d="M1051 489h9M1143 361h8M765 268h6" stroke="#aaa" stroke-dasharray="1 2"/>
          <!-- coordinate axes -->
          <path d="M329 765l-18-5" stroke="#0a8a10"/><path d="M329 766l-6 7" stroke="#900"/><path d="M329.500 766v14" stroke="#007" stroke-width="1.500"/>
          <path d="M304 758l10-4v8l-4 3z" fill="#16a01c"/><path d="M316 770l4-2 5 1v8l-5 3-5-2z" fill="#a80c0c"/><path d="M322 781l6-4 5 5-6 6z" fill="#0c0c96"/>
          <g class="axis"><text x="295" y="760" fill="#2fcf2f">Y</text><text x="307" y="788" fill="#e62a2a">X</text><text x="323" y="797" fill="#3434d8">Z</text></g>
          <!-- view cube -->
          <path d="M1345 203l21-16 41 10-18 15z" fill="#8b8b8b"/><path d="M1345 203l44 9-2 46-44-15z" fill="#8f8f8f"/><path d="M1389 212l18-15-6 38-14 23z" fill="#797979"/>
          <path d="M1345 203l44 9 18-15M1389 212l-2 46" fill="none" stroke="#757575" stroke-dasharray="3 1"/><path d="M1383 211l12-2-1 12-12 1z" fill="#6f7276"/>
          <text transform="translate(1368 248) rotate(-82)" class="vc">Справа</text><text transform="translate(1386 199) rotate(-170)" class="vc s">ди.</text><text transform="translate(1397 231) rotate(-65)" class="vc s">Вт</text>
        </svg>
        <div class="mdi"><button aria-label="Свернуть документ"><svg width="12" height="12" viewBox="0 0 12 12"><path d="M0 7h11v3H0z" fill="#fff"/></svg></button><button aria-label="Восстановить документ"><svg width="12" height="12" viewBox="0 0 12 12"><path d="M4 1.500h6.500V8" fill="none" stroke="#fff"/><path d="M2 4h6v6H2z" fill="none" stroke="#fff" stroke-width="2"/></svg></button><button aria-label="Закрыть документ"><svg width="12" height="12" viewBox="0 0 12 12"><path d="M2 2l8 8M10 2l-8 8" stroke="#fff" stroke-width="2.500"/></svg></button></div>
        <div class="navbar">
          <svg width="31" height="229" viewBox="0 0 31 229">
            <circle cx="24" cy="6" r="4" fill="#666"/><path d="M22 4l4 4M26 4l-4 4" stroke="#ddd"/>
            <path d="M4 32c0-6 5-10 11-10h11v10c0 6-5 11-11 11S4 38 4 32z" fill="#c4c4c4" stroke="#686868"/><path d="M6 37h18c-3 7-15 8-18 0z" fill="#83b98a"/><circle cx="15" cy="32" r="6" fill="#c9c9c9" stroke="#888"/><path d="M12 29l6 6M18 29l-6 6" stroke="#aaa"/>
            <path d="M12 52h5l-2.500 3zM12 114h5l-2.500 3zM12 148h5l-2.500 3zM12 206h5l-2.500 3z" fill="#666"/><path d="M3 60.500h26" stroke="#555"/>
            <path d="M12 81c-4-5-5-6-4-7l4 2-3-7 2-1 3 6-1-8h2l1 7 2-7 2 1-1 7 3-4 1 1c-2 4-2 8-5 10z" fill="#eee" stroke="#555" stroke-width=".8"/>
            <path d="M18 102l5 5" stroke="#555" stroke-width="3"/><circle cx="14" cy="98" r="5" fill="#b9c9da" stroke="#667"/><path d="M20 94h5M22.500 91v6M20 99h5" stroke="#444"/>
            <ellipse cx="15" cy="133" rx="8" ry="4" fill="none" stroke="#666"/><ellipse cx="15" cy="133" rx="3" ry="8" fill="none" stroke="#666"/><path d="M12 133h6M15.500 130v6" stroke="#c22"/>
            <path d="M7.500 163.500h16v11h-16z" fill="#e3cf5a" stroke="#555"/><path d="M11 167h9v4h-9z" fill="#9fbccc" stroke="#555"/><path d="M9 162l5-4-1 3h6l3-3" fill="none" stroke="#356" stroke-width="1.300"/>
            <path d="M8 189l8-6 7-1-6 6z" fill="#eee" stroke="#666"/><path d="M8 189h9v9H8z" fill="#e6d35c" stroke="#666"/><path d="M17 189l6-7v8l-6 8z" fill="#d8cfa0" stroke="#8a4a40"/>
            <circle cx="24" cy="223" r="4" fill="#666"/><path d="M22 221h4M22 223h4l-2 2z" fill="#eee" stroke="#eee" stroke-width=".6"/>
          </svg>
        </div>
      </div>
      <div class="doctabs">
        <button class="ib" aria-label="Каскад"><svg width="18" height="18" viewBox="0 0 18 18"><path d="M1.500 2.500h10v8h-10zM4.500 5.500h10v8h-10zM6.500 8.500h10v7h-10z" fill="#e6e6e6" stroke="#333"/><path d="M7 9.500h9" stroke="#333"/></svg></button>
        <button class="ib" aria-label="Мозаика"><svg width="18" height="18" viewBox="0 0 18 18"><path d="M1.500 3.500h6v4h-6zM10.500 3.500h6v4h-6zM1.500 10.500h6v4h-6zM10.500 10.500h6v4h-6z" fill="#fff" stroke="#333"/></svg></button>
        <button class="ib" aria-label="Список"><svg width="18" height="18" viewBox="0 0 18 18"><path d="M4 8h10L9 3z" fill="#333"/></svg></button>
        <button class="dt">Струбцина 90.iam</button>
        <button class="dt act">Прицеп.iam <svg width="9" height="9" viewBox="0 0 9 9"><path d="M1 1h2l1.500 2L6 1h2v2L6 4.500 8 6v2H6L4.500 6 3 8H1V6l2-1.500L1 3z" fill="#fff" stroke="#555" stroke-width=".9"/></svg></button>
      </div>
    </section>
  </main>
  <footer class="status"><span>Режим ожидания</span><span class="n">53</span><span class="n">30</span></footer>
</div>
</body>
</html>
```
FILE: styles.css
```css
* { box-sizing: border-box; }
html, body { height: 100%; margin: 0; }
body { font: 12px/16px Roboto, "Open Sans", sans-serif; color: #333; background: #f0f0f0; overflow: hidden; }
button { font: inherit; color: inherit; background: none; border: 0; padding: 0; margin: 0; cursor: pointer; }
svg { display: block; flex: none; }
.sprite { position: absolute; width: 0; height: 0; }
.app { display: flex; flex-direction: column; height: 100vh; }

/* title bar and tabs */
.top { display: grid; grid-template-columns: 38px 1fr; grid-template-rows: 22px 19px; background: #3f3f3f; flex: none; }
.appbtn { grid-row: 1 / 3; height: 40px; background: linear-gradient(#6c6c6c, #b4b4b4 60%, #8a8a8a); border-right: 1px solid #222; border-bottom: 1px solid #222; }
.pro { font: bold 9px "Open Sans", sans-serif; fill: #222; }
.titlebar { display: flex; border-bottom: 1px solid #9aa4ae; overflow: hidden; }
.qat { display: flex; align-items: stretch; padding-left: 4px; background: linear-gradient(#a6a6a6, #7f7f7f); flex: none; }
.q { width: 24px; border-left: 1px solid #c0c0c0; background: linear-gradient(#8c8c8c, #a9a9a9); display: flex; overflow: hidden; }
.q.wide { width: 37px; }
.q.more { width: 13px; align-items: center; justify-content: center; }
.sep { width: 5px; border-left: 1px solid #c0c0c0; border-right: 1px solid #c0c0c0; }
.colorbox { display: flex; align-items: center; width: 101px; padding-right: 4px; background: linear-gradient(#cfcfcf, #e2e2e2); border: 1px solid #bbb; color: #333; }
.colorbox select { flex: 1; min-width: 0; appearance: none; border: 0; padding: 0 3px; background: none; color: #888; font: italic 12px/16px "Open Sans", sans-serif; }
.fx { font-family: "Liberation Serif", serif; font-style: italic; font-weight: bold; fill: #1c1c1c; }
.fxb { font-family: "Liberation Serif", serif; font-style: italic; fill: #3a3f46; stroke: #3a3f46; stroke-width: .8; }
.aero { flex: 1; display: flex; gap: 13px; align-items: center; justify-content: center; white-space: nowrap; font-weight: 500; color: #fff; background: radial-gradient(ellipse 26px 14px at 66% 60%, #86aecb 0, transparent 100%), radial-gradient(ellipse 24px 16px at 92% 60%, #8ab3cc 0, transparent 100%), linear-gradient(90deg, #2f4358, #34495f 26%, #3f6b9c 32%, #3a6fae 55%, #1c5187 75%, #245a90 88%, #2d6299); }
.info { flex: none; display: flex; align-items: center; background: linear-gradient(#8f8f8f, #6d6d6d); }
.info input { width: 180px; height: 20px; padding: 0 2px; border: 1px solid #aaa; background: #f6f6f6; font: italic 11px/16px "Open Sans", sans-serif; color: #666; }
.info input::placeholder { color: #666; opacity: 1; }
.isep { width: 9px; height: 16px; border-left: 1px solid #555; margin-left: 4px; }
.qm { font: bold 13px "Open Sans", sans-serif; fill: #1d4a90; }
.win { flex: none; display: flex; align-items: flex-start; padding: 0 3px 0 16px; background: linear-gradient(#6f9ac8, #5c8abb); }
.win button { height: 16px; border: 1px solid #26384d; border-top: 0; background: linear-gradient(#a8bfd6, #6384a8); display: flex; justify-content: center; }
.win button:nth-child(1) { width: 29px; border-radius: 0 0 0 4px; }
.win button:nth-child(2) { width: 27px; border-left: 0; }
.win .close { width: 47px; border-left: 0; border-radius: 0 0 4px 0; background: linear-gradient(#dd9a8a, #bd3a28 50%, #c95035); }
.tabs { display: flex; padding-left: 3px; color: #fff; font-weight: 500; }
.tabs button { padding: 2px 10px 0; line-height: 17px; white-space: nowrap; }
.tabs .on { width: 59px; padding: 0; margin: 2px 0 0; background: linear-gradient(#c9c9c9, #fafafa); color: #333; font-weight: 400; }
.tabs .mini { padding: 0 0 1px 22px; display: flex; align-items: center; }

/* ribbon */
.ribbon { flex: none; display: flex; height: 96px; padding-top: 1px; background: linear-gradient(#d0d0d0, #8f8f8f); border-bottom: 2px solid #9a9a9a; margin-right: 2px; }
.panel { display: flex; flex-direction: column; flex: none; background: #fff; border-right: 1px solid #a8a8a8; }
.p1 { width: 343px; } .p2 { width: 153px; } .p3 { width: 162px; } .p4 { width: 204px; }
.p5 { width: 127px; } .p6 { width: 121px; } .p7 { width: 168px; } .p8 { width: 134px; }
.panel h2 { margin: 0; height: 18px; border-top: 1px solid #ddd; background: #eee; font: 12px/18px Roboto, sans-serif; color: #444; display: flex; align-items: center; justify-content: center; gap: 7px; white-space: nowrap; }
.body { flex: 1; display: flex; align-items: flex-start; padding-top: 3px; white-space: nowrap; }
.body.mid { justify-content: center; }
.p1 .body { padding-left: 4px; }
.big { display: flex; flex-direction: column; align-items: center; padding-top: 1px; }
.big > svg:first-child { margin-bottom: 3px; }
.big .dd { margin-top: 2px; }
.big .last { display: flex; align-items: center; gap: 3px; padding-left: 8px; }
.w44 { width: 44px; } .w60 { width: 60px; } .w68 { width: 68px; } .w70 { width: 70px; } .w80 { width: 80px; } .w82 { width: 83px; } .w90 { width: 90px; }
.grow { flex: 1; }
.vsep { width: 1px; height: 70px; background: #ccc; margin-left: 2px; }
.rows { display: flex; flex-direction: column; width: 155px; flex: none; }
.rows button { display: flex; align-items: center; gap: 4px; height: 24px; }
.minis { display: flex; flex-direction: column; gap: 2px; }
.minis > div { display: flex; gap: 2px; }
.p2 .minis { margin-left: 3px; }
.sq, .split { display: flex; height: 22px; border: 1px solid #c8c8c8; background: #fafafa; }
.sq { width: 24px; align-items: center; justify-content: center; }
.split button { width: 22px; display: flex; align-items: center; justify-content: center; }
.split .arr { width: 13px; border-left: 1px solid #c8c8c8; }

/* model browser */
.work { flex: 1; min-height: 0; display: flex; }
.side { flex: none; width: 276px; padding-right: 3px; display: flex; flex-direction: column; background: #f0f0f0; border-bottom: 1px solid #999; border-right: 1px solid #999; font: 11px/18px "DejaVu Sans Condensed", "DejaVu Sans", sans-serif; color: #000; }
.grip { display: flex; align-items: center; gap: 5px; height: 15px; padding: 0 2px 0 1px; }
.grip i { flex: 1; height: 6px; border: 1px solid #999; border-left: 0; }
.shead { display: flex; align-items: center; gap: 4px; height: 20px; padding: 0 3px 0 8px; background: #aaa; color: #fff; font-size: 13px; }
.shead button { margin-left: auto; }
.stools { display: flex; align-items: center; height: 28px; padding-left: 4px; }
.stools i { width: 1px; height: 18px; background: #888; margin: 0 13px 0 6px; }
.stools .t2 { margin-left: 13px; }
.stools .t3 { display: flex; align-items: center; gap: 4px; font: 12px/16px Roboto, sans-serif; }
.stools .t3 svg:last-child { margin-left: 8px; }
.stools .t4 { margin-left: 8px; }
.treebox { flex: 1; min-height: 0; display: flex; margin-bottom: 27px; background: #fff; border: 1px solid #666; border-left-color: #777; }
.tree { flex: 1; margin: 0; padding: 0; list-style: none; overflow: hidden; }
.tree li { display: flex; align-items: center; height: 18px; white-space: nowrap; }
.tree .root { padding-left: 5px; }
.tree .root b { padding-left: 1px; }
.tree button svg { width: 24px; height: 18px; }
.tree .ln { width: 19px; height: 18px; }
.tree .ic { width: 16px; height: 16px; margin-right: 2px; }
.sbar { width: 16px; display: flex; flex-direction: column; background: #f0f0f0; color: #444; }
.sbar button { height: 18px; display: flex; align-items: center; justify-content: center; }
.thumb { flex: 320; margin: 0 1px; border: 1px solid #999; border-radius: 2px; background: linear-gradient(90deg, #f4f4f4, #e8e8e8 50%, #c4c4c4); display: flex; align-items: center; justify-content: center; }
.rest { flex: 254; }

/* viewport */
.view { flex: 1; min-width: 0; display: flex; flex-direction: column; margin-right: 2px; }
.canvas { flex: 1; min-height: 0; position: relative; background: linear-gradient(#2d2d2d, #454545 17%, #6b6b6b 52%, #8d8d8d 81%, #a2a2a2); }
.scene { width: 100%; height: 100%; }
.hl { fill: none; stroke: #cfcfd3; stroke-width: 1; stroke-dasharray: 3 1; }
.dk { fill: none; stroke: #2e2e31; stroke-width: 1; stroke-dasharray: 1 4; }
.rim { fill: none; stroke: #6e6e6e; stroke-width: 2; }
.rim2 { fill: none; stroke: #747474; stroke-width: 2; }
.axis text { font: 11px "Noto Sans", sans-serif; }
.vc { font: 11px "Noto Sans", sans-serif; fill: #4c4c4c; }
.vc.s { font-size: 8px; }
.mdi { position: absolute; top: 6px; right: 1px; display: flex; gap: 8px; }
.navbar { position: absolute; top: 140px; right: 1px; border: 1px solid #4d4d4d; border-radius: 4px; background: #8a8a8a; }
.doctabs { flex: none; display: flex; height: 22px; padding-top: 2px; background: linear-gradient(#d5d5d5, #bcbcbc); border-top: 1px solid #eee; border-bottom: 1px solid #999; }
.ib { width: 20px; border: 1px solid #333; border-left: 0; background: #ddd; overflow: hidden; }
.dt { display: flex; align-items: center; height: 17px; padding: 0 11px 0 8px; border: 1px solid #666; border-top: 0; border-radius: 0 0 6px 6px; background: #cdcdcd; color: #222; }
.dt.act { background: #fff; padding: 0 8px; gap: 6px; }

.status { flex: none; display: flex; align-items: center; height: 18px; padding: 5px 19px 0 0; background: linear-gradient(#fff, #bdbdbd); color: #222; }
.status span:first-child { flex: 1; }
.status .n { width: 38px; text-align: right; }
```
